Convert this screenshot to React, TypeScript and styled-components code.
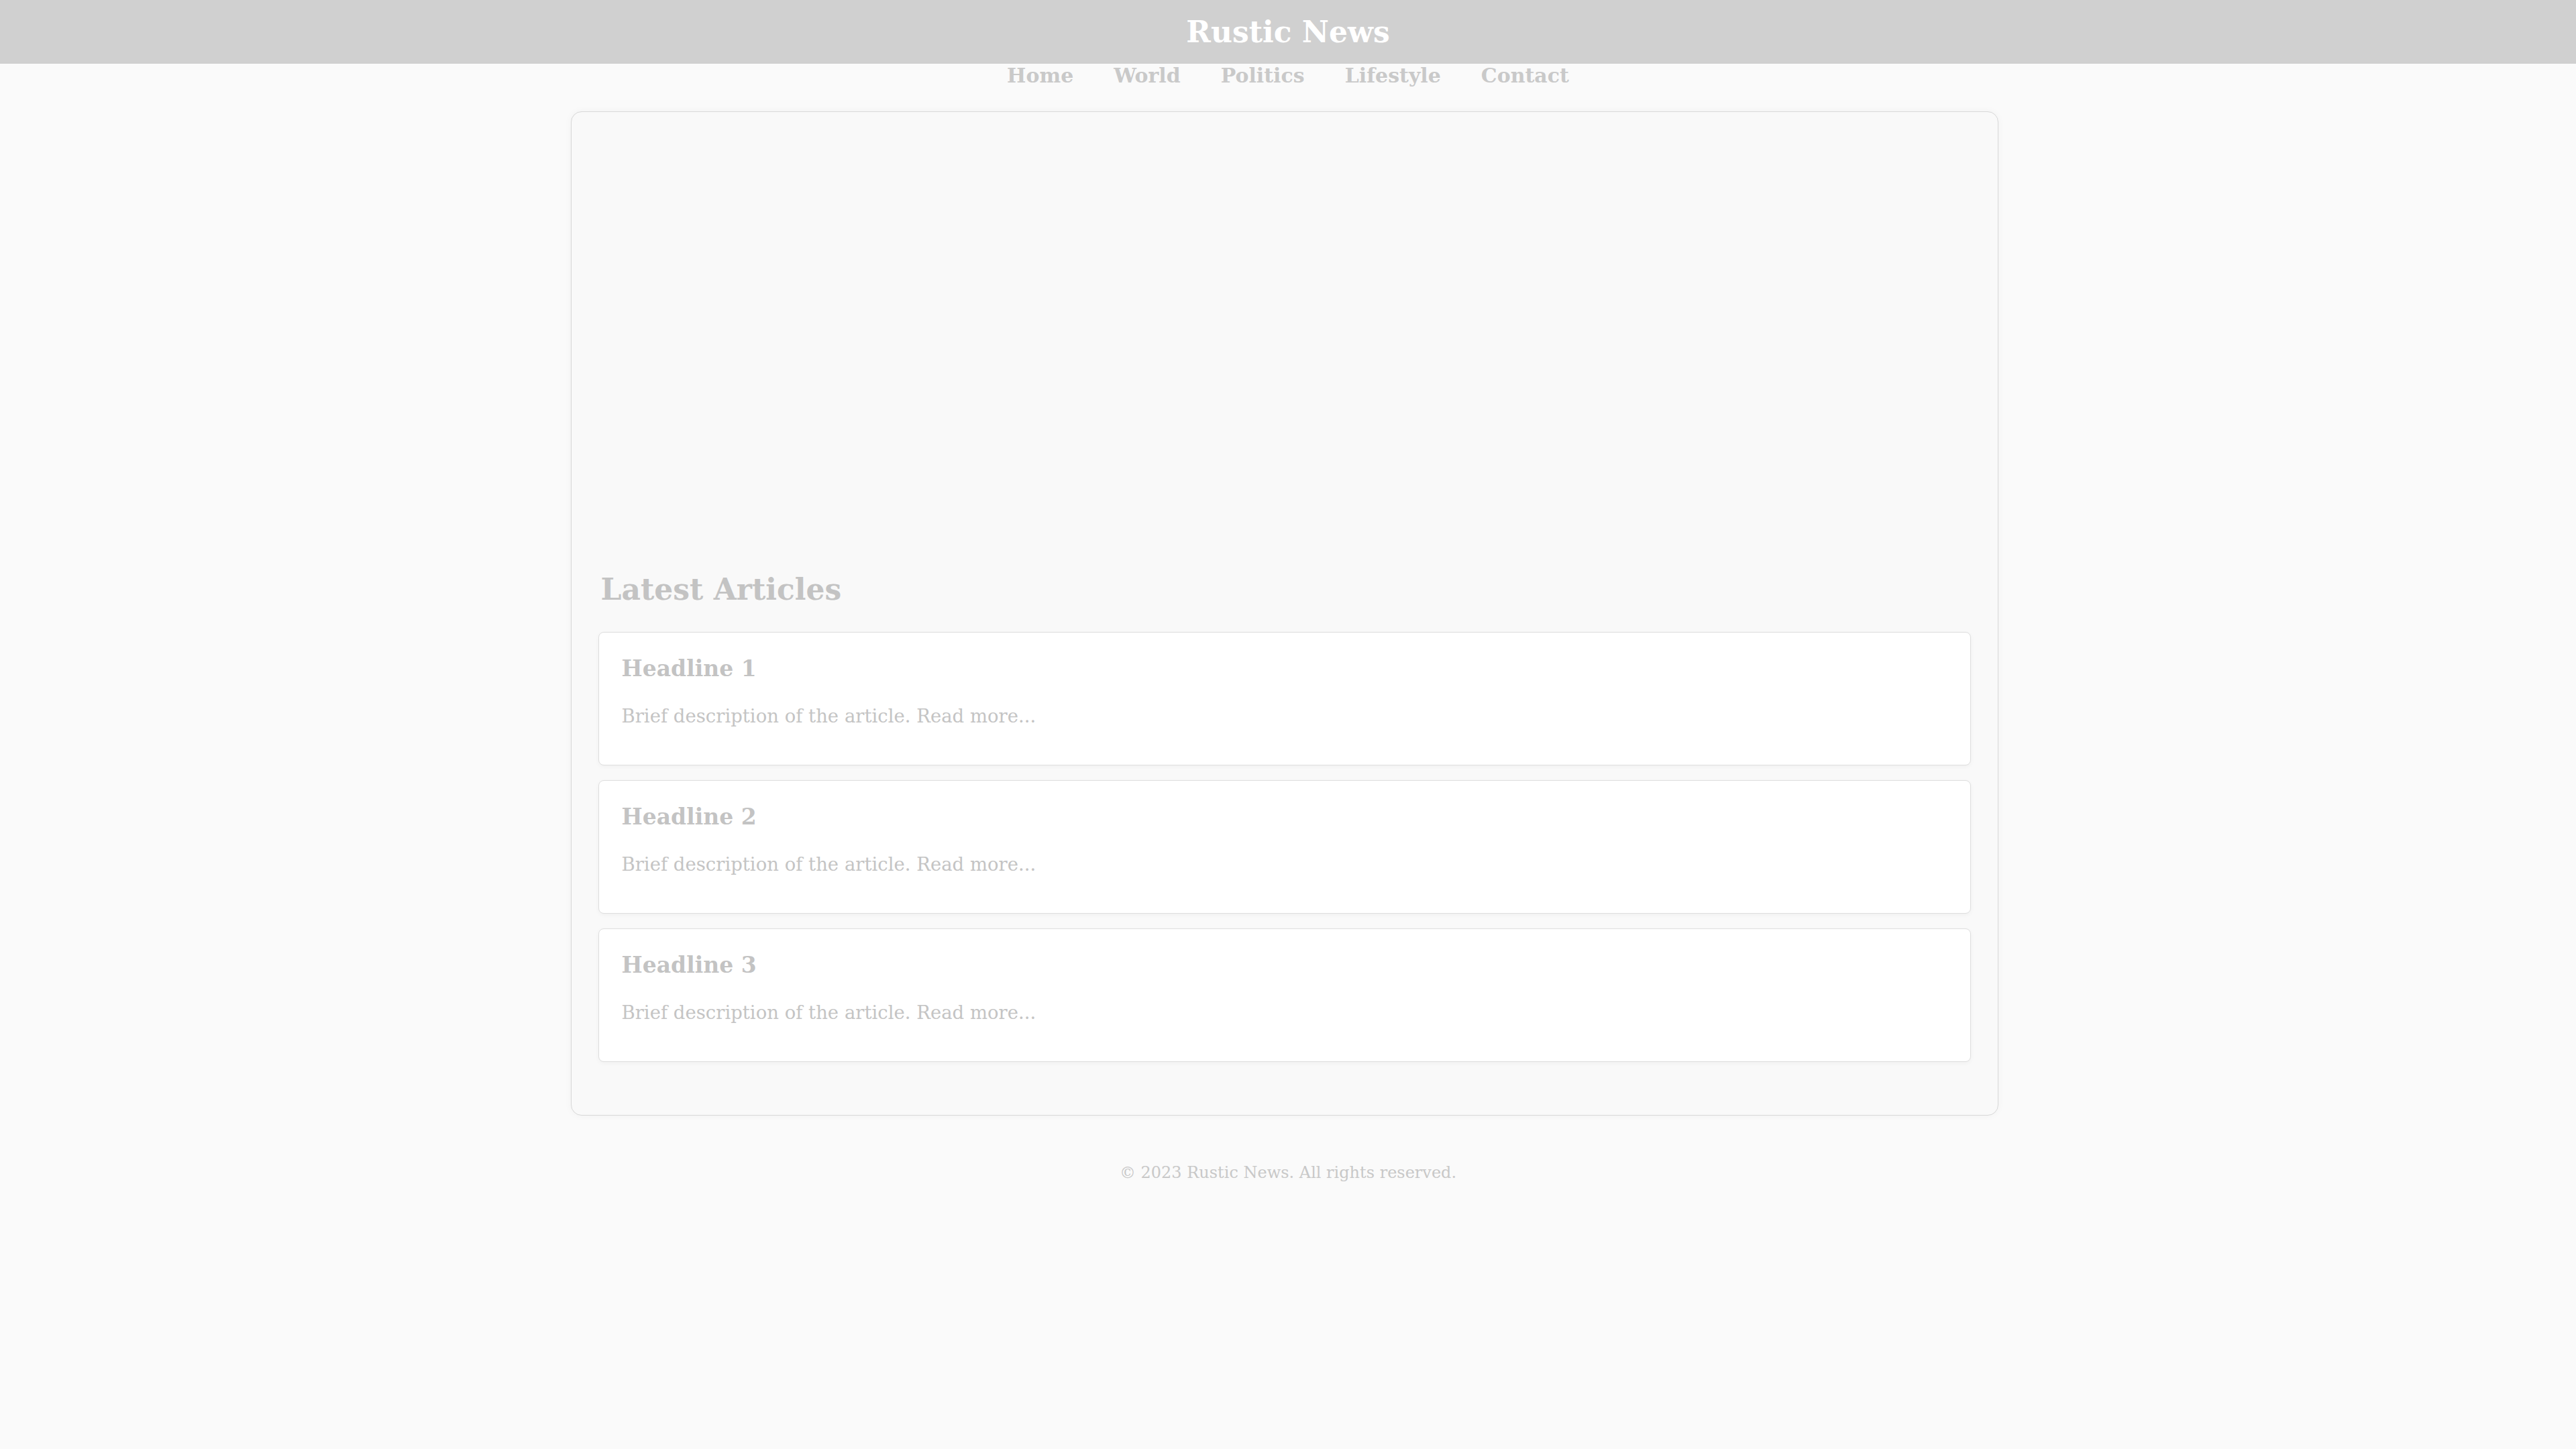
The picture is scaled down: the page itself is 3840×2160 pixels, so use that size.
import React from "react";
import styled, { createGlobalStyle } from "styled-components";

const Global = createGlobalStyle`
  html, body { margin: 0; padding: 0; background: #fafafa; }
  body { font-family: "DejaVu Serif", "Liberation Serif", serif; }
`;

const Header = styled.header`
  height: 95px;
  background: #d0d0d0;
  display: flex;
  align-items: center;
  justify-content: center;
`;

const Title = styled.h1`
  margin: 0;
  color: #ffffff;
  font-size: 44px;
  font-weight: 700;
  line-height: 1;
`;

const Nav = styled.nav`
  display: flex;
  justify-content: center;
  gap: 60px;
  height: 36px;
  align-items: center;
`;

const NavLink = styled.a`
  font-size: 30px;
  font-weight: 700;
  color: #c9c9c9;
  text-decoration: none;
  line-height: 36px;
`;

const Wrapper = styled.div`
  display: flex;
  justify-content: center;
  padding: 35px 11px 0 0;
`;

const Card = styled.main`
  width: 2128px;
  box-sizing: border-box;
  border: 1px solid #d8d8d8;
  border-radius: 16px;
  background: #f9f9f9;
  padding: 40px;
  box-shadow: 0 0 12px rgba(0, 0, 0, 0.04);
`;

const Hero = styled.div`
  height: 646px;
`;

const SectionTitle = styled.h2`
  margin: 0 0 37px 4px;
  font-size: 44px;
  line-height: 52px;
  font-weight: 700;
  color: #c3c3c3;
`;

const List = styled.div`
  display: flex;
  flex-direction: column;
  gap: 22px;
  margin-bottom: 39px;
`;

const Article = styled.article`
  height: 199px;
  box-sizing: border-box;
  border: 1px solid #dedede;
  border-radius: 8px;
  background: #ffffff;
  padding: 34px 34px 0;
  box-shadow: 0 2px 6px rgba(0, 0, 0, 0.04);
`;

const Headline = styled.h3`
  margin: 0 0 32px;
  font-size: 33px;
  line-height: 40px;
  font-weight: 700;
  color: #c3c3c3;
`;

const Desc = styled.p`
  margin: 0;
  font-size: 27.5px;
  line-height: 36px;
  color: #c4c4c4;
`;

const Footer = styled.footer`
  margin-top: 69px;
  text-align: center;
  font-size: 24px;
  line-height: 32px;
  color: #c8c8c8;
`;

const navItems = ["Home", "World", "Politics", "Lifestyle", "Contact"];
const articles = ["Headline 1", "Headline 2", "Headline 3"];

export default function App() {
  return (
    <>
      <Global />
      <Header>
        <Title>Rustic News</Title>
      </Header>
      <Nav>
        {navItems.map((n) => (
          <NavLink key={n} href="#">
            {n}
          </NavLink>
        ))}
      </Nav>
      <Wrapper>
        <Card>
          <Hero />
          <SectionTitle>Latest Articles</SectionTitle>
          <List>
            {articles.map((a) => (
              <Article key={a}>
                <Headline>{a}</Headline>
                <Desc>Brief description of the article. Read more...</Desc>
              </Article>
            ))}
          </List>
        </Card>
      </Wrapper>
      <Footer>© 2023 Rustic News. All rights reserved.</Footer>
    </>
  );
}
